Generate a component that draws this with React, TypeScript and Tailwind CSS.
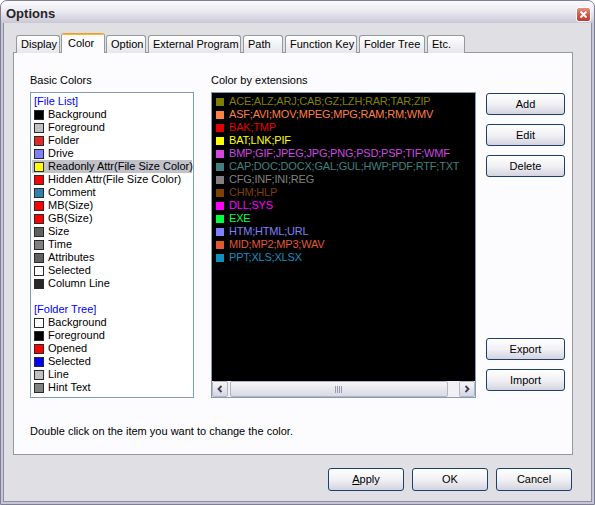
import React from "react";

type BasicItem = { head?: string; name?: string; color?: string; blank?: boolean; selected?: boolean };

const basicColors: BasicItem[] = [
  { head: "[File List]" },
  { name: "Background", color: "#000000" },
  { name: "Foreground", color: "#c0c0c0" },
  { name: "Folder", color: "#e02828" },
  { name: "Drive", color: "#8080ff" },
  { name: "Readonly Attr(File Size Color)", color: "#ffff00", selected: true },
  { name: "Hidden Attr(File Size Color)", color: "#ff0000" },
  { name: "Comment", color: "#2f80ad" },
  { name: "MB(Size)", color: "#ff0000" },
  { name: "GB(Size)", color: "#ff0000" },
  { name: "Size", color: "#606060" },
  { name: "Time", color: "#808080" },
  { name: "Attributes", color: "#606060" },
  { name: "Selected", color: "#ffffff" },
  { name: "Column Line", color: "#282828" },
  { blank: true },
  { head: "[Folder Tree]" },
  { name: "Background", color: "#ffffff" },
  { name: "Foreground", color: "#000000" },
  { name: "Opened", color: "#ff0000" },
  { name: "Selected", color: "#0000ff" },
  { name: "Line", color: "#c0c0c0" },
  { name: "Hint Text", color: "#808080" },
];

const extensions = [
  { ext: "ACE;ALZ;ARJ;CAB;GZ;LZH;RAR;TAR;ZIP", color: "#808000" },
  { ext: "ASF;AVI;MOV;MPEG;MPG;RAM;RM;WMV", color: "#ff8040" },
  { ext: "BAK;TMP", color: "#e00000" },
  { ext: "BAT;LNK;PIF", color: "#ffff00" },
  { ext: "BMP;GIF;JPEG;JPG;PNG;PSD;PSP;TIF;WMF", color: "#d048e0" },
  { ext: "CAP;DOC;DOCX;GAL;GUL;HWP;PDF;RTF;TXT", color: "#408080" },
  { ext: "CFG;INF;INI;REG", color: "#808080" },
  { ext: "CHM;HLP", color: "#804000" },
  { ext: "DLL;SYS", color: "#ff00ff" },
  { ext: "EXE", color: "#00ff40" },
  { ext: "HTM;HTML;URL", color: "#8080ff" },
  { ext: "MID;MP2;MP3;WAV", color: "#e05a30" },
  { ext: "PPT;XLS;XLSX", color: "#1090c0" },
];

const tabs = [
  { label: "Display", cls: "w-[44px]" },
  { label: "Color", cls: "w-[44px] ml-[1px]", active: true },
  { label: "Option", cls: "w-[40px] ml-[1px]" },
  { label: "External Program", cls: "w-[93px] ml-[2px]" },
  { label: "Path", cls: "w-[40px] ml-[2px]" },
  { label: "Function Key", cls: "w-[72px] ml-[2px]" },
  { label: "Folder Tree", cls: "w-[66px] ml-[2px]" },
  { label: "Etc.", cls: "w-[38px] ml-[2px]" },
];

function XpButton({ children, className = "" }: { children: React.ReactNode; className?: string }) {
  return (
    <button
      className={`flex items-center justify-center rounded-[3px] border border-[#1c3f6e] bg-gradient-to-b from-[#ffffff] via-[#f1f1f5] to-[#d4d4e0] text-[11px] text-black ${className}`}
    >
      {children}
    </button>
  );
}

function ScrollButton({ dir }: { dir: "left" | "right" }) {
  return (
    <div className="flex h-[16px] w-[16px] shrink-0 items-center justify-center rounded-[2px] border border-[#b4b4c4] bg-gradient-to-b from-[#f6f6f9] to-[#d6d6e2]">
      <svg width="8" height="8" viewBox="0 0 8 8">
        {dir === "left" ? (
          <path d="M5.5 1 L2.5 4 L5.5 7" fill="none" stroke="#3c3c4c" strokeWidth="1.8" />
        ) : (
          <path d="M2.5 1 L5.5 4 L2.5 7" fill="none" stroke="#3c3c4c" strokeWidth="1.8" />
        )}
      </svg>
    </div>
  );
}

export default function App() {
  return (
    <div className="flex h-[505px] w-[595px] flex-col overflow-hidden rounded-t-[7px] border border-[#7e7e94] bg-[#c6c5d5] font-['Liberation_Sans',Arial,sans-serif] text-[11px] text-black">
      {/* title bar */}
      <div className="flex h-[22px] shrink-0 items-center justify-between bg-gradient-to-b from-[#fbfbfd] via-[#e9e9f0] to-[#c9c8d8] pl-[5px] pr-[3px] pt-[3px]">
        <span className="text-[13px] font-bold text-[#262626]">Options</span>
        <div className="mt-[2px] flex h-[15px] w-[15px] items-center justify-center rounded-[3px] border border-white bg-gradient-to-b from-[#e8907e] via-[#d15a48] to-[#b83c30]">
          <svg width="9" height="9" viewBox="0 0 9 9">
            <path d="M1.5 1.5 L7.5 7.5 M7.5 1.5 L1.5 7.5" stroke="#fff" strokeWidth="1.9" />
          </svg>
        </div>
      </div>

      {/* body */}
      <div className="mx-[2px] mb-[2px] flex flex-1 flex-col border-x border-b border-[#8e8ea3] bg-[#e0dfe3] pl-[9px] pt-[10px]">
        {/* tabs */}
        <div className="relative z-10 flex h-[20px] items-end pl-[3px]">
          {tabs.map((t) =>
            t.active ? (
              <div
                key={t.label}
                className={`flex h-[20px] flex-col rounded-t-[3px] border-x border-[#919b9c] bg-[#fcfcfe] ${t.cls}`}
              >
                <div className="h-[3px] rounded-t-[3px] bg-gradient-to-b from-[#e68b2c] to-[#ffc73c]" />
                <div className="flex flex-1 items-center pb-[2px] pl-[6px]">{t.label}</div>
              </div>
            ) : (
              <div
                key={t.label}
                className={`flex h-[18px] items-center rounded-t-[3px] border-x border-t border-[#919b9c] bg-gradient-to-b from-[#ffffff] to-[#e6e6ec] pl-[4px] ${t.cls}`}
              >
                {t.label}
              </div>
            )
          )}
        </div>

        {/* panel */}
        <div className="-mt-[1px] flex h-[403px] w-[560px] flex-col border border-[#919b9c] bg-[#fcfcfe] pl-[16px] pt-[20px]">
          <div className="flex">
            <div className="flex w-[164px] flex-col">
              <div className="h-[14px] leading-[14px]">Basic Colors</div>
              <div className="mt-[5px] h-[306px] border border-[#7f9db9] bg-white pt-[2px]">
                {basicColors.map((b, i) =>
                  b.blank ? (
                    <div key={i} className="h-[13px]" />
                  ) : b.head ? (
                    <div key={i} className="mx-[1px] h-[13px] pl-[2px] leading-[13px] text-[#0000ff]">
                      {b.head}
                    </div>
                  ) : (
                    <div
                      key={i}
                      className={`mx-[1px] flex h-[13px] items-center gap-[4px] pl-[2px] leading-[13px] ${b.selected ? "bg-[#c1c1c9]" : ""}`}
                    >
                      <span className="h-[10px] w-[10px] shrink-0 border border-[#2a2a2a]" style={{ backgroundColor: b.color }} />
                      <span className="whitespace-nowrap">{b.name}</span>
                    </div>
                  )
                )}
              </div>
            </div>

            <div className="ml-[17px] flex w-[265px] flex-col">
              <div className="h-[14px] leading-[14px]">Color by extensions</div>
              <div className="mt-[5px] flex h-[306px] flex-col border border-[#7f9db9] bg-black">
                <div className="flex-1 pt-[2px]">
                  {extensions.map((e) => (
                    <div key={e.ext} className="flex h-[13px] items-center gap-[5px] pl-[4px] leading-[13px]">
                      <span className="h-[8px] w-[8px] shrink-0" style={{ backgroundColor: e.color }} />
                      <span className="whitespace-nowrap tracking-[-0.2px]" style={{ color: e.color }}>
                        {e.ext}
                      </span>
                    </div>
                  ))}
                </div>
                <div className="flex h-[16px] items-center bg-[#f1f1f5]">
                  <ScrollButton dir="left" />
                  <div className="flex flex-1 items-center">
                    <div className="ml-[2px] flex h-[16px] w-[218px] items-center justify-center rounded-[2px] border border-[#b4b4c4] bg-gradient-to-b from-[#f6f6f9] to-[#d9d9e4]">
                      <svg width="8" height="7" viewBox="0 0 8 7">
                        <path d="M0.5 0 V7 M2.5 0 V7 M4.5 0 V7 M6.5 0 V7" stroke="#9a9aae" strokeWidth="1" />
                      </svg>
                    </div>
                  </div>
                  <ScrollButton dir="right" />
                </div>
              </div>
            </div>

            <div className="ml-[10px] flex w-[79px] flex-col pt-[19px]">
              <div className="flex h-[306px] flex-col justify-between pb-[7px] pt-[1px]">
                <div className="flex flex-col gap-[9px]">
                  <XpButton className="h-[22px] w-[79px]">Add</XpButton>
                  <XpButton className="h-[22px] w-[79px]">Edit</XpButton>
                  <XpButton className="h-[22px] w-[79px]">Delete</XpButton>
                </div>
                <div className="flex flex-col gap-[9px]">
                  <XpButton className="h-[22px] w-[79px]">Export</XpButton>
                  <XpButton className="h-[22px] w-[79px]">Import</XpButton>
                </div>
              </div>
            </div>
          </div>

          <div className="mt-[26px] h-[14px] leading-[14px]">Double click on the item you want to change the color.</div>
        </div>

        {/* dialog buttons */}
        <div className="mt-[13px] flex w-[560px] justify-end gap-[8px] pr-[1px]">
          <XpButton className="h-[23px] w-[76px]">
            <span className="underline">A</span>pply
          </XpButton>
          <XpButton className="h-[23px] w-[76px]">OK</XpButton>
          <XpButton className="h-[23px] w-[76px]">Cancel</XpButton>
        </div>
      </div>
    </div>
  );
}
